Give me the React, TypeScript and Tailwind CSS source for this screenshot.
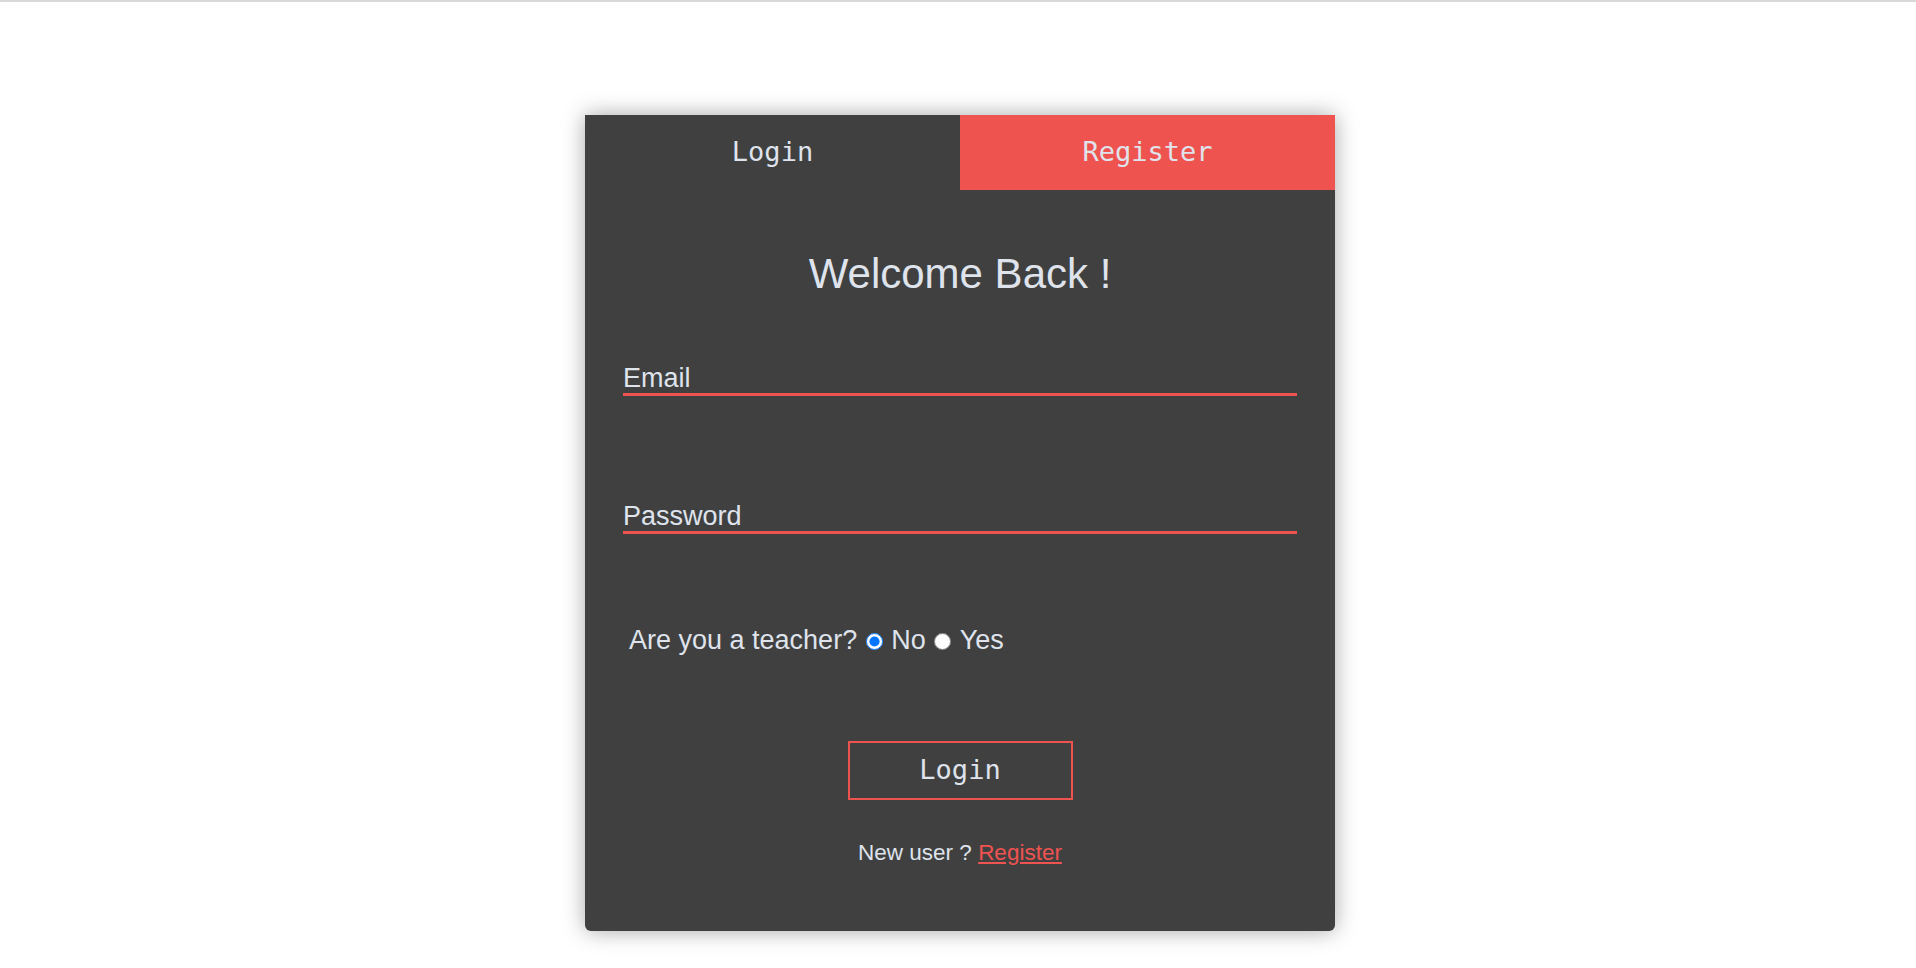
import React, { useState } from 'react';

const mono = { fontFamily: '"DejaVu Sans Mono", "Liberation Mono", monospace' };

// Underlined input, placeholder doubles as the label
const Field = ({ type, placeholder }: { type: string; placeholder: string }) => (
  <input
    type={type}
    placeholder={placeholder}
    className="block w-full h-[37px] pt-[4px] bg-transparent border-b-[3px] border-[#ef5350] text-[27px] leading-[30px] text-[#dfe3ec] placeholder:text-[#dfe3ec] outline-none"
  />
);

export default function App() {
  const [tab, setTab] = useState<'login' | 'register'>('login');
  const [teacher, setTeacher] = useState(false);

  return (
    <div className="min-h-screen bg-white" style={{ fontFamily: '"Liberation Sans", Arial, sans-serif' }}>
      <div className="h-[2px] bg-[#d9d9d9]" />
      <div className="pl-[4px]">
        <div className="w-[750px] mx-auto mt-[113px] bg-[#404040] rounded-b-[6px] shadow-[0_0_22px_rgba(0,0,0,0.35)]">
          {/* tabs */}
          <div className="flex h-[75px] text-[27px] text-[#dfe3ec]" style={mono}>
            <button
              onClick={() => setTab('login')}
              className={`flex-1 flex items-center justify-center ${tab === 'login' ? 'bg-[#404040]' : 'bg-[#ef5350]'}`}
            >
              Login
            </button>
            <button
              onClick={() => setTab('register')}
              className={`flex-1 flex items-center justify-center ${tab === 'register' ? 'bg-[#404040]' : 'bg-[#ef5350]'}`}
            >
              Register
            </button>
          </div>

          <div className="px-[38px] pb-[65px]">
            <h1 className="mt-[60px] text-center text-[42px] leading-[48px] text-[#dfe3ec]">Welcome Back !</h1>

            <div className="mt-[61px]">
              <Field type="email" placeholder="Email" />
            </div>
            <div className="mt-[101px]">
              <Field type="password" placeholder="Password" />
            </div>

            <div className="mt-[90px] h-[32px] pl-[6px] flex items-center text-[27px] text-[#dfe3ec]">
              <span>Are you a teacher?</span>
              <input
                type="radio"
                name="teacher"
                checked={!teacher}
                onChange={() => setTeacher(false)}
                className="ml-[9px] w-[17px] h-[17px] mt-[3px]"
              />
              <span className="ml-[8px]">No</span>
              <input
                type="radio"
                name="teacher"
                checked={teacher}
                onChange={() => setTeacher(true)}
                className="ml-[8px] w-[17px] h-[17px] mt-[3px]"
              />
              <span className="ml-[9px]">Yes</span>
            </div>

            <div className="mt-[85px] flex justify-center">
              <button
                className="w-[225px] h-[59px] border-2 border-[#ef5350] text-[27px] text-[#dfe3ec]"
                style={mono}
              >
                Login
              </button>
            </div>

            <p className="mt-[40px] text-center text-[22.5px] leading-[26px] text-[#dfe3ec]">
              New user ?{' '}
              <a href="#" className="text-[#ef5350] underline">
                Register
              </a>
            </p>
          </div>
        </div>
      </div>
    </div>
  );
}
